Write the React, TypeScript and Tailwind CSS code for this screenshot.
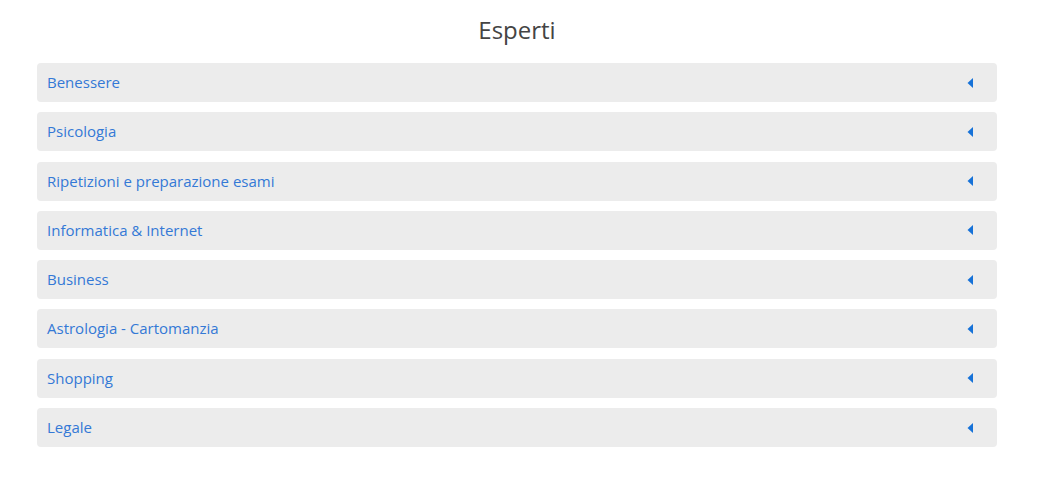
import React from "react";

const categories = [
  "Benessere",
  "Psicologia",
  "Ripetizioni e preparazione esami",
  "Informatica & Internet",
  "Business",
  "Astrologia - Cartomanzia",
  "Shopping",
  "Legale",
];

const CaretLeft: React.FC = () => (
  <svg width="6" height="10" viewBox="0 0 6 10" className="text-[#1672d8]">
    <path d="M6 0 L0.5 5 L6 10 Z" fill="currentColor" />
  </svg>
);

export default function App() {
  return (
    <div className="min-h-screen bg-white font-['Open_Sans',sans-serif] pl-[37px] pr-[42px]">
      {/* Title */}
      <h1 className="pt-[13px] text-center text-[24px] leading-[33px] text-[#444444]">
        Esperti
      </h1>

      {/* Accordion rows */}
      <div className="mt-[17px] flex w-[960px] flex-col gap-[10.3px]">
        {categories.map((name) => (
          <button
            key={name}
            className="flex h-[39px] w-full items-center justify-between rounded-[4px] bg-[#ececec] pl-[10px] pr-[24px] text-left"
          >
            <span className="text-[15px] leading-[19px] text-[#3479d6]">{name}</span>
            <CaretLeft />
          </button>
        ))}
      </div>
    </div>
  );
}
